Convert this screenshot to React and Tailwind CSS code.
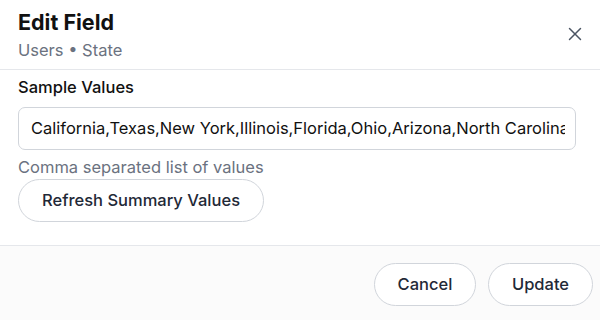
import { X } from "lucide-react";

export default function App() {
  return (
    <div
      className="w-[600px] h-[320px] bg-white flex flex-col overflow-hidden"
      style={{ fontFamily: "Inter, 'Noto Sans', sans-serif" }}
    >
      <div className="h-[70px] border-b border-[#e5e7eb] flex items-start justify-between pl-[18px] pr-[14px] shrink-0">
        <div className="pt-[8px]">
          <h1 className="text-[21.5px] leading-[28px] font-bold text-[#111]">Edit Field</h1>
          <p className="text-[16.5px] leading-[24px] mt-[2px] text-[#6b7280]">Users • State</p>
        </div>
        <button className="mt-[23px] text-[#4b5563]">
          <X size={22} strokeWidth={1.6} />
        </button>
      </div>

      <div className="flex-1 px-[18px] pt-[5px] border-b border-[#e5e7eb]">
        <label className="block text-[16.5px] leading-[24px] font-medium text-[#111]">Sample Values</label>
        <div className="mt-[8px] h-[43px] w-[558px] border border-[#d1d5db] rounded-[7px] flex items-center pl-[12px] pr-[10px] overflow-hidden">
          <span className="text-[16.5px] text-[#111] whitespace-nowrap overflow-hidden">
            California,Texas,New York,Illinois,Florida,Ohio,Arizona,North Carolina
          </span>
        </div>
        <p className="mt-[5px] text-[16.5px] leading-[24px] text-[#6b7280]">Comma separated list of values</p>
        <button className="h-[43px] px-[23px] rounded-full border border-[#d1d5db] bg-white text-[16.5px] font-medium text-[#1f2937]">
          Refresh Summary Values
        </button>
      </div>

      <div className="h-[74px] bg-[#fbfbfb] flex justify-end items-start gap-[12px] pt-[17px] pr-[7px] shrink-0">
        <button className="h-[43px] w-[102px] rounded-full border border-[#d1d5db] bg-white text-[16.5px] font-medium text-[#1f2937]">
          Cancel
        </button>
        <button className="h-[43px] w-[105px] rounded-full border border-[#d1d5db] bg-white text-[16.5px] font-medium text-[#1f2937]">
          Update
        </button>
      </div>
    </div>
  );
}
